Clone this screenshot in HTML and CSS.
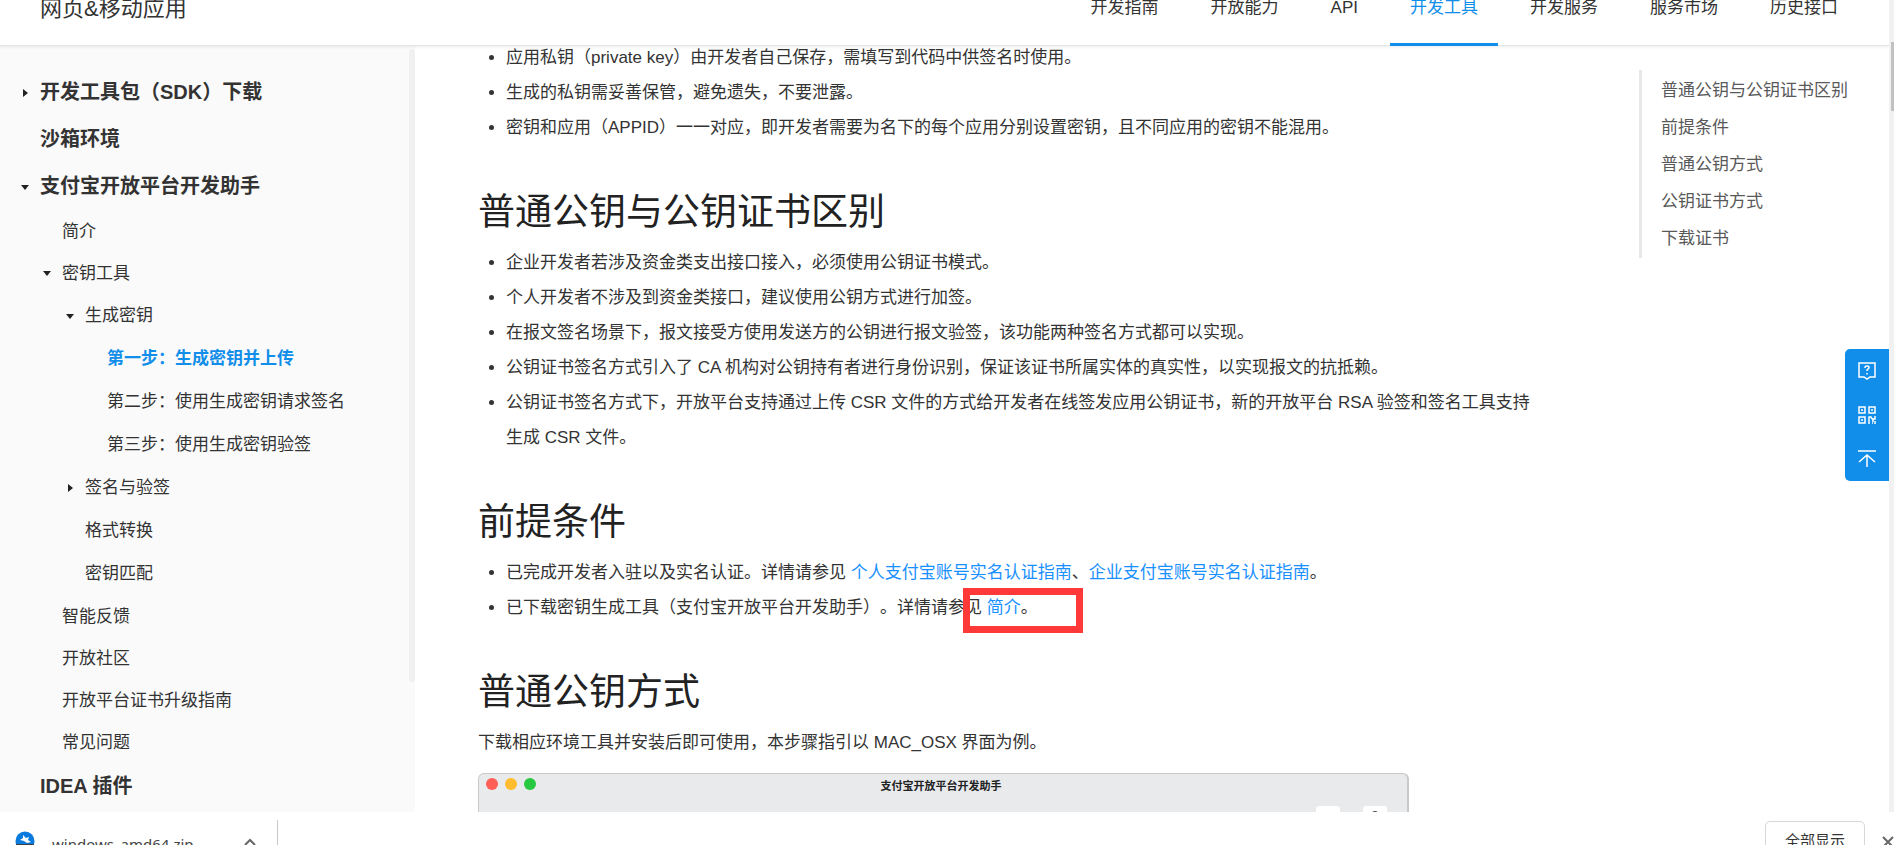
FILE: index.html
```html
<!DOCTYPE html>
<html lang="zh-CN">
<head>
<meta charset="utf-8">
<title>网页&amp;移动应用</title>
<link rel="stylesheet" href="styles.css">
</head>
<body>
<div class="viewport">
  <div class="page">
    <header class="header">
      <a class="brand" href="#">网页&amp;移动应用</a>
      <nav class="tabs">
        <a class="tab" href="#">开发指南</a>
        <a class="tab" href="#">开放能力</a>
        <a class="tab" href="#">API</a>
        <a class="tab tab-active" href="#">开发工具</a>
        <a class="tab" href="#">开发服务</a>
        <a class="tab" href="#">服务市场</a>
        <a class="tab" href="#">历史接口</a>
      </nav>
    </header>
    <div class="columns">
      <aside class="sidebar">
        <ul class="tree">
          <li><a class="node top" href="#"><svg class="caret" viewBox="0 0 10 10"><path d="M3 1v8l5-4z"/></svg>开发工具包（SDK）下载</a></li>
          <li><a class="node top" href="#">沙箱环境</a></li>
          <li><a class="node top" href="#"><svg class="caret" viewBox="0 0 10 10"><path d="M1 3h8l-4 5z"/></svg>支付宝开放平台开发助手</a>
            <ul class="tree">
              <li><a class="node first" href="#">简介</a></li>
              <li><a class="node first" href="#"><svg class="caret" viewBox="0 0 10 10"><path d="M1 3h8l-4 5z"/></svg>密钥工具</a>
                <ul class="tree">
                  <li><a class="node second" href="#"><svg class="caret" viewBox="0 0 10 10"><path d="M1 3h8l-4 5z"/></svg>生成密钥</a>
                    <ul class="tree">
                      <li><a class="node third current" href="#">第一步：生成密钥并上传</a></li>
                      <li><a class="node third" href="#">第二步：使用生成密钥请求签名</a></li>
                      <li><a class="node third" href="#">第三步：使用生成密钥验签</a></li>
                    </ul>
                  </li>
                  <li><a class="node second" href="#"><svg class="caret" viewBox="0 0 10 10"><path d="M3 1v8l5-4z"/></svg>签名与验签</a></li>
                  <li><a class="node second" href="#">格式转换</a></li>
                  <li><a class="node second" href="#">密钥匹配</a></li>
                </ul>
              </li>
              <li><a class="node first" href="#">智能反馈</a></li>
              <li><a class="node first" href="#">开放社区</a></li>
              <li><a class="node first" href="#">开放平台证书升级指南</a></li>
              <li><a class="node first" href="#">常见问题</a></li>
            </ul>
          </li>
          <li><a class="node top" href="#">IDEA 插件</a></li>
        </ul>
        <div class="side-thumb"></div>
      </aside>
      <main class="article">
        <ul class="points">
          <li>应用私钥（private key）由开发者自己保存，需填写到代码中供签名时使用。</li>
          <li>生成的私钥需妥善保管，避免遗失，不要泄露。</li>
          <li>密钥和应用（APPID）一一对应，即开发者需要为名下的每个应用分别设置密钥，且不同应用的密钥不能混用。</li>
        </ul>
        <h2 class="title">普通公钥与公钥证书区别</h2>
        <ul class="points">
          <li>企业开发者若涉及资金类支出接口接入，必须使用公钥证书模式。</li>
          <li>个人开发者不涉及到资金类接口，建议使用公钥方式进行加签。</li>
          <li>在报文签名场景下，报文接受方使用发送方的公钥进行报文验签，该功能两种签名方式都可以实现。</li>
          <li>公钥证书签名方式引入了 CA 机构对公钥持有者进行身份识别，保证该证书所属实体的真实性，以实现报文的抗抵赖。</li>
          <li>公钥证书签名方式下，开放平台支持通过上传 CSR 文件的方式给开发者在线签发应用公钥证书，新的开放平台 RSA 验签和签名工具支持生成 CSR 文件。</li>
        </ul>
        <h2 class="title">前提条件</h2>
        <ul class="points">
          <li>已完成开发者入驻以及实名认证。详情请参见 <a class="link" href="#">个人支付宝账号实名认证指南</a>、<a class="link" href="#">企业支付宝账号实名认证指南</a>。</li>
          <li>已下载密钥生成工具（支付宝开放平台开发助手）。详情请参见 <span class="marked"><a class="link" href="#">简介</a>。<span class="mark"></span></span></li>
        </ul>
        <h2 class="title">普通公钥方式</h2>
        <p class="text">下载相应环境工具并安装后即可使用，本步骤指引以 MAC_OSX 界面为例。</p>
        <div class="window">
          <div class="lights"><i class="light red"></i><i class="light yellow"></i><i class="light green"></i></div>
          <div class="window-title">支付宝开放平台开发助手</div>
          <div class="window-tools">
            <svg class="tool" viewBox="0 0 24 24"><rect width="24" height="24" rx="3" fill="#fff"/><path d="M4 8h6M14 8h6" stroke="#ccc" stroke-width="2"/></svg>
            <svg class="tool" viewBox="0 0 24 24"><rect width="24" height="24" rx="3" fill="#fff"/><circle cx="12" cy="8" r="3" fill="#444"/></svg>
          </div>
        </div>
      </main>
      <nav class="toc">
        <a href="#">普通公钥与公钥证书区别</a>
        <a href="#">前提条件</a>
        <a href="#">普通公钥方式</a>
        <a href="#">公钥证书方式</a>
        <a href="#">下载证书</a>
      </nav>
    </div>
    <div class="dock">
      <button class="dock-btn" aria-label="帮助"><svg viewBox="0 0 18 18"><path d="M1 1h16v14h-5l-3 2-3-2H1z"/><path d="M7 6V5q0-1 2-1t2 1.500q0 1-1 1.500t-1 2M9 11v1.500"/></svg></button>
      <button class="dock-btn" aria-label="二维码"><svg viewBox="0 0 18 18"><path d="M1 1h6v6H1zM11 1h6v6h-6zM1 11h6v6H1zM3 4h2M13 4h2M3 14h2M11 18v-7h2l2 3v2M17 10v3h-2M14 17h1M17 15v3"/></svg></button>
      <button class="dock-btn" aria-label="返回顶部"><svg viewBox="0 0 18 18"><path d="M0 1h18M9 17V5M1 12l8-7 8 7"/></svg></button>
    </div>
  </div>
  <div class="scrollbar"><div class="thumb"></div></div>
</div>
<footer class="downloads">
  <div class="file">
    <svg class="file-icon" viewBox="0 0 20 20"><circle cx="10" cy="10" r="9.500" fill="#0a7bdc"/><path d="M8 4l3 3 3-1-1 3 3 2-4 1-3-2-4-1 3-2z" fill="#fff"/><path d="M1 13h18v5H1z" fill="#3c4043"/></svg>
    <span class="file-name">windows_amd64.zip</span>
    <svg class="chevron" viewBox="0 0 12 12"><path d="M1 7l5-5 5 5"/></svg>
  </div>
  <button class="show-all">全部显示</button>
  <button class="close" aria-label="关闭"><svg viewBox="0 0 12 12"><path d="M1 1l10 10M11 1L1 11"/></svg></button>
</footer>
</body>
</html>
```
FILE: styles.css
```css
* { box-sizing: border-box; }
body {
  margin: 0;
  height: 100vh;
  display: flex;
  flex-direction: column;
  overflow: hidden;
  background: #fff;
  color: #333;
  font: 17px/35px "Liberation Sans", "Noto Sans CJK SC", sans-serif;
  text-spacing-trim: space-all;
}
a { color: inherit; text-decoration: none; }
ul { list-style: none; margin: 0; padding: 0; }
button { font: inherit; border: 0; padding: 0; background: none; cursor: pointer; }

.viewport { flex: 1; min-height: 0; display: flex; }
.page { flex: 1; min-width: 0; display: flex; flex-direction: column; position: relative; overflow: hidden; }

.header {
  flex: none;
  z-index: 2;
  display: flex;
  justify-content: space-between;
  height: 46px;
  padding: 0 31px 0 40px;
  background: #fff;
  border-bottom: 1px solid #e5e5e5;
  box-shadow: 0 1px 3px rgba(0, 0, 0, .08);
  line-height: 16px;
}
.brand { font-size: 22px; line-height: 18px; }
.tabs { display: flex; gap: 12px; }
.tab { height: 46px; padding: 0 20px; }
.tab-active { color: #108ee9; border-bottom: 3px solid #108ee9; }

.columns { flex: 1; min-height: 0; display: flex; }
.sidebar {
  flex: none;
  display: flex;
  justify-content: space-between;
  width: 415px;
  padding-top: 3px;
  background: #fafafa;
}
.sidebar > .tree { padding-top: 20px; }
.node { display: flex; align-items: center; height: 43px; }
.caret { width: 10px; height: 10px; margin-left: -20px; margin-right: 10px; fill: #222; }
.top { height: 47px; padding-left: 40px; font-size: 20px; font-weight: 700; }
.first { height: 42px; padding-left: 62px; }
.second { padding-left: 85px; }
.third { padding-left: 107px; }
.current { color: #108ee9; font-weight: 700; }
.side-thumb { width: 6px; height: 83%; border-radius: 3px; background: #f0f0f0; }

.article { flex: 1; min-width: 0; margin-top: -6px; padding: 0 100px 0 63px; }
.points { list-style: disc; padding-left: 28px; }
.title { margin: 44px 0 9px; color: #222; font-size: 37px; font-weight: 400; line-height: 47px; }
.text { margin: 0 0 13px; }
.link { color: #1890ff; }
.marked { position: relative; }
.mark { position: absolute; left: -24px; top: -10px; width: 120px; height: 45px; border: 7px solid #ff3838; }

.window {
  display: flex;
  justify-content: space-between;
  width: 931px;
  max-width: 100%;
  height: 80px;
  padding: 4px 20px 0 7px;
  border: 1px solid #c8c9cb;
  border-right-width: 2px;
  border-radius: 6px 6px 0 0;
  background: #e8eaec;
}
.lights { display: flex; gap: 7px; width: 80px; }
.light { width: 12px; height: 12px; border-radius: 50%; }
.red { background: #ff5f57; }
.yellow { background: #febc2e; }
.green { background: #28c840; }
.window-title { color: #222; font-size: 11px; font-weight: 700; line-height: 16px; }
.window-tools { display: flex; gap: 23px; padding-top: 28px; }
.tool { width: 24px; height: 24px; }

.toc {
  flex: none;
  align-self: flex-start;
  display: flex;
  flex-direction: column;
  width: 250px;
  margin-top: 24px;
  padding: 2px 0 1px 19px;
  border-left: 3px solid #e8e8e8;
  color: #595959;
  line-height: 37px;
}

.dock {
  position: absolute;
  right: 0;
  top: 349px;
  width: 44px;
  border-radius: 5px 0 0 5px;
  background: #108ee9;
}
.dock-btn { display: flex; align-items: center; justify-content: center; width: 44px; height: 44px; }
.dock-btn svg { width: 18px; height: 18px; fill: none; stroke: #fff; stroke-width: 1.5; overflow: visible; }

.scrollbar { flex: none; width: 5px; padding: 42px 0 0 2px; background: #f1f1f1; }
.thumb { height: 69px; background: #c1c1c1; }

.downloads {
  flex: none;
  display: flex;
  align-items: flex-start;
  height: 33px;
  padding: 8px 0 0 15px;
  overflow: hidden;
  background: #fff;
}
.file {
  display: flex;
  align-items: center;
  width: 263px;
  height: 48px;
  margin-right: auto;
  border-right: 1px solid #c8c8c8;
}
.file-icon { width: 20px; height: 20px; margin: 0 17px 6px 0; }
.file-name { width: 192px; color: #444; font: 15px/24px "Noto Sans", sans-serif; }
.chevron { flex: none; width: 12px; height: 12px; fill: none; stroke: #666; stroke-width: 2; }
.show-all { width: 100px; height: 40px; margin-top: 1px; border: 1px solid #d5d7da; border-radius: 5px; color: #333; font-size: 15px; line-height: 38px; }
.close { width: 12px; margin: 16px 0 0 17px; line-height: 12px; }
.close svg { width: 12px; height: 12px; stroke: #666; stroke-width: 2; }
```
